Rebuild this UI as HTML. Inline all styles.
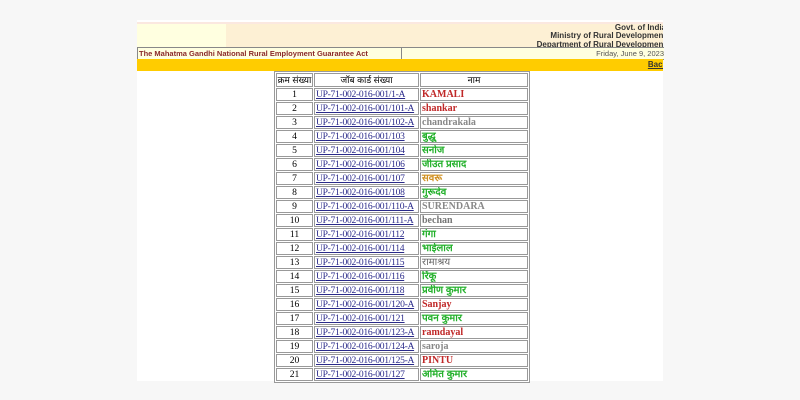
<!DOCTYPE html>
<html><head><meta charset="utf-8"><style>
body{margin:0;width:800px;height:400px;background:#f7f7f7;position:relative;overflow:hidden;font-family:"Liberation Sans",sans-serif}
.pg{position:absolute;left:137px;top:20px;width:526px;height:361px;background:#fff}
.a{position:absolute}
table{position:absolute;left:274px;top:71px;border-collapse:separate;border-spacing:1px;background:#fff;border:1px solid #999;font-family:"Liberation Serif","Noto Serif CJK SC",serif;font-size:9.6px;table-layout:fixed;width:253px}
td,th{border:1px solid #999;height:11px;padding:0 1px;line-height:11px;white-space:nowrap;overflow:hidden;box-sizing:border-box}
th{font-weight:normal;font-family:"Liberation Sans","Noto Sans CJK SC",sans-serif;font-size:9px;height:14px;padding:0}
td:first-child{text-align:center}
td:nth-child(2){padding:0 0 0 1px;letter-spacing:-0.3px}
td:nth-child(3){font-weight:bold;font-size:10px}
a{color:#2a2a8a;text-decoration:underline}
.r{color:#c02828}.g{color:#888}.gr{color:#22b02a;font-family:"Liberation Sans","Noto Sans CJK SC",sans-serif}.o{color:#d09020;font-family:"Liberation Sans","Noto Sans CJK SC",sans-serif}.n{color:#666;font-weight:normal!important;font-family:"Liberation Sans","Noto Sans CJK SC",sans-serif}
.hd{position:absolute;left:137px;top:22px;width:526px;height:26px;overflow:hidden}
</style></head><body>
<div class="pg"></div>
<div class="a" style="left:137px;top:22px;width:526px;height:2px;background:#fbe8e0"></div>
<div class="a" style="left:137px;top:24px;width:89px;height:23px;background:#ffffe0"></div>
<div class="a" style="left:226px;top:24px;width:437px;height:23px;background:#fdf0d4"></div>
<div class="hd"><div class="a" style="right:-3px;top:2px;text-align:right;font-size:8px;font-weight:bold;color:#333;line-height:8.3px">Govt. of India<br>Ministry of Rural Development<br>Department of Rural Development</div></div>
<div class="a" style="left:137px;top:47px;width:262px;height:11px;background:#ffffe0;border:1px solid #888;font-size:7.5px;font-weight:bold;color:#8a2a2a;line-height:11px;padding-left:1px">The Mahatma Gandhi National Rural Employment Guarantee Act</div>
<div class="a" style="left:401px;top:47px;width:262px;height:11px;background:#ffffe0;border:1px solid #888;border-right:none;font-size:7.5px;color:#555;line-height:11px;text-align:right">Friday, June 9, 2023</div>
<div class="a" style="left:137px;top:59px;width:526px;height:12px;background:#ffcc00;overflow:hidden"><u style="position:absolute;right:-4px;top:0;font-size:8px;font-weight:bold;line-height:12px;color:#333">Back</u></div>
<table>
<colgroup><col style="width:37px"><col style="width:105px"><col style="width:108px"></colgroup>
<tr><th>क्रम संख्या</th><th>जॉब कार्ड संख्या</th><th>नाम</th></tr>
<tr><td>1</td><td><a>UP-71-002-016-001/1-A</a></td><td class="r">KAMALI</td></tr>
<tr><td>2</td><td><a>UP-71-002-016-001/101-A</a></td><td class="r">shankar</td></tr>
<tr><td>3</td><td><a>UP-71-002-016-001/102-A</a></td><td class="g">chandrakala</td></tr>
<tr><td>4</td><td><a>UP-71-002-016-001/103</a></td><td class="gr">बुद्धु</td></tr>
<tr><td>5</td><td><a>UP-71-002-016-001/104</a></td><td class="gr">सनोज</td></tr>
<tr><td>6</td><td><a>UP-71-002-016-001/106</a></td><td class="gr">जीउत प्रसाद</td></tr>
<tr><td>7</td><td><a>UP-71-002-016-001/107</a></td><td class="o">सवरू</td></tr>
<tr><td>8</td><td><a>UP-71-002-016-001/108</a></td><td class="gr">गुरूदेव</td></tr>
<tr><td>9</td><td><a>UP-71-002-016-001/110-A</a></td><td class="g">SURENDARA</td></tr>
<tr><td>10</td><td><a>UP-71-002-016-001/111-A</a></td><td class="g" style="color:#777">bechan</td></tr>
<tr><td>11</td><td><a>UP-71-002-016-001/112</a></td><td class="gr">गंगा</td></tr>
<tr><td>12</td><td><a>UP-71-002-016-001/114</a></td><td class="gr">भाईलाल</td></tr>
<tr><td>13</td><td><a>UP-71-002-016-001/115</a></td><td class="n">रामाश्रय</td></tr>
<tr><td>14</td><td><a>UP-71-002-016-001/116</a></td><td class="gr">रिंकू</td></tr>
<tr><td>15</td><td><a>UP-71-002-016-001/118</a></td><td class="gr">प्रवीण कुमार</td></tr>
<tr><td>16</td><td><a>UP-71-002-016-001/120-A</a></td><td class="r">Sanjay</td></tr>
<tr><td>17</td><td><a>UP-71-002-016-001/121</a></td><td class="gr">पवन कुमार</td></tr>
<tr><td>18</td><td><a>UP-71-002-016-001/123-A</a></td><td class="r">ramdayal</td></tr>
<tr><td>19</td><td><a>UP-71-002-016-001/124-A</a></td><td class="g">saroja</td></tr>
<tr><td>20</td><td><a>UP-71-002-016-001/125-A</a></td><td class="r">PINTU</td></tr>
<tr><td>21</td><td><a>UP-71-002-016-001/127</a></td><td class="gr">अमित कुमार</td></tr>
</table>
</body></html>
